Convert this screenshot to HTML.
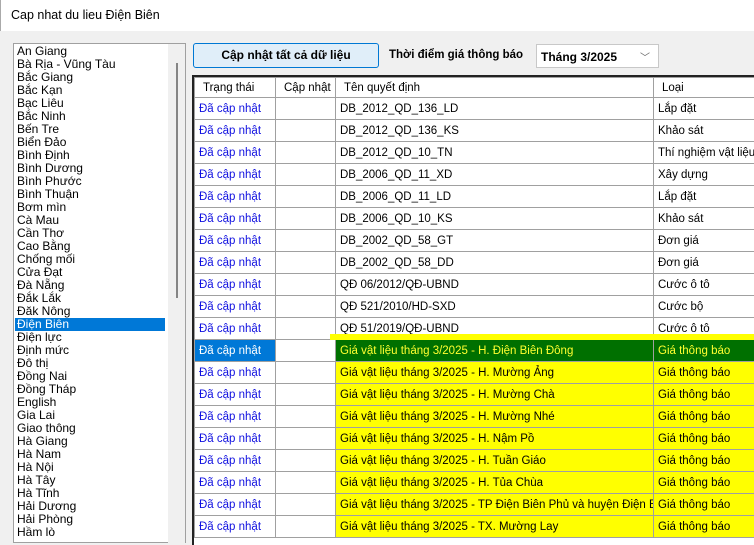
<!DOCTYPE html>
<html><head><meta charset="utf-8"><style>
*{margin:0;padding:0;box-sizing:border-box}
body{width:754px;height:537px;overflow:hidden;background:#f0f0f0;font-family:"Liberation Sans",sans-serif;font-size:12px;position:relative;color:#000}
#title{position:absolute;left:0;top:0;width:754px;height:31px;background:#fff;border-left:1px solid #aaa}
#title span{position:absolute;left:10px;top:8px;font-size:12.5px}
#list{position:absolute;left:13px;top:43px;width:173px;height:500px;background:#fff;border:1px solid #a0a0a0}
#list .it{position:absolute;left:3px;height:13px;line-height:13px;font-size:12px;white-space:nowrap}
#list .sel{background:#0078d7;color:#fff;width:150px;left:1px;padding-left:2px}
#sb{position:absolute;left:154px;top:0;width:17px;height:500px;background:#f0f0f0}
#thumb{position:absolute;left:8px;top:19px;width:2px;height:235px;background:#858585}
#btn{position:absolute;left:193px;top:43px;width:186px;height:25px;background:#e0eef9;border:1px solid #0078d4;border-radius:3px;font-weight:bold;text-align:center;line-height:23px;font-size:12px}
#lbl{position:absolute;left:389px;top:49px;font-weight:bold;font-size:11.5px}
#cb{position:absolute;left:536px;top:44px;width:123px;height:24px;background:#fff;border:1px solid #c8c8c8;font-weight:bold;font-size:12px;padding:5px 4px}
#cb i{position:absolute;right:8px;top:4px;font-style:normal;color:#666;font-size:10px;font-weight:normal}
#grid{position:absolute;left:192px;top:75px;width:570px;height:470px;background:#fff;border-top:2px solid #222;border-left:2px solid #222}
#ybar{position:absolute;left:330px;top:334px;width:430px;height:6px;background:#ffff00}
table{border-collapse:collapse;position:absolute;left:0;top:0;table-layout:fixed;width:580px}
td{height:22px;border:1px solid #a0a0a0;padding:0 4px;white-space:nowrap;overflow:hidden;font-size:11.5px}
tr.h td{height:20px;padding-left:8px}
td.s{color:#1010e0}
tr.y td.n,tr.y td.l{background:#ffff00}
tr.g td.n,tr.g td.l{background:#007000;color:#ffff30}
tr.g td.s{background:#0078d7;color:#fff}
</style></head><body>
<div id="title"><span>Cap nhat du lieu Điện Biên</span></div>
<div id="list">
<div id="sb"><div id="thumb"></div></div>
</div>
<div id="btn">Cập nhật tất cả dữ liệu</div>
<div id="lbl">Thời điểm giá thông báo</div>
<div id="cb">Tháng 3/2025<i>﹀</i></div>
<div id="grid"><table>
<colgroup><col style="width:81px"><col style="width:60px"><col style="width:318px"><col style="width:121px"></colgroup>
<tr class="h"><td>Trạng thái</td><td>Cập nhật</td><td>Tên quyết định</td><td>Loại</td></tr>
</table></div>
<div id="ybar"></div>
<script>
var items=["An Giang","Bà Rịa - Vũng Tàu","Bắc Giang","Bắc Kạn","Bạc Liêu","Bắc Ninh","Bến Tre","Biển Đảo","Bình Định","Bình Dương","Bình Phước","Bình Thuận","Bơm mìn","Cà Mau","Cần Thơ","Cao Bằng","Chống mối","Cửa Đạt","Đà Nẵng","Đắk Lắk","Đăk Nông","Điện Biên","Điện lực","Định mức","Đô thị","Đồng Nai","Đồng Tháp","English","Gia Lai","Giao thông","Hà Giang","Hà Nam","Hà Nội","Hà Tây","Hà Tĩnh","Hải Dương","Hải Phòng","Hầm lò"];
var L=document.getElementById('list'),h='';
items.forEach(function(t,i){h+='<div class="it'+(i==21?' sel':'')+'" style="top:'+(1+i*13)+'px">'+t+'</div>'});
L.insertAdjacentHTML('beforeend',h);
var rows=[["DB_2012_QD_136_LD","Lắp đặt"],["DB_2012_QD_136_KS","Khảo sát"],["DB_2012_QD_10_TN","Thí nghiệm vật liệu"],["DB_2006_QD_11_XD","Xây dựng"],["DB_2006_QD_11_LD","Lắp đặt"],["DB_2006_QD_10_KS","Khảo sát"],["DB_2002_QD_58_GT","Đơn giá"],["DB_2002_QD_58_DD","Đơn giá"],["QĐ 06/2012/QĐ-UBND","Cước ô tô"],["QĐ 521/2010/HD-SXD","Cước bộ"],["QĐ 51/2019/QĐ-UBND","Cước ô tô"]];
["H. Điện Biên Đông","H. Mường Ảng","H. Mường Chà","H. Mường Nhé","H. Nậm Pồ","H. Tuần Giáo","H. Tủa Chùa","TP Điện Biên Phủ và huyện Điện Biên","TX. Mường Lay"].forEach(function(s){rows.push(["Giá vật liệu tháng 3/2025 - "+s,"Giá thông báo"])});
var T=document.querySelector('table'),r='';
rows.forEach(function(x,i){var c=i==11?'g':(i>11?'y':'');r+='<tr class="'+c+'"><td class="s">Đã cập nhật</td><td class="c"></td><td class="n">'+x[0]+'</td><td class="l">'+x[1]+'</td></tr>'});
T.insertAdjacentHTML('beforeend',r);
</script>
</body></html>
